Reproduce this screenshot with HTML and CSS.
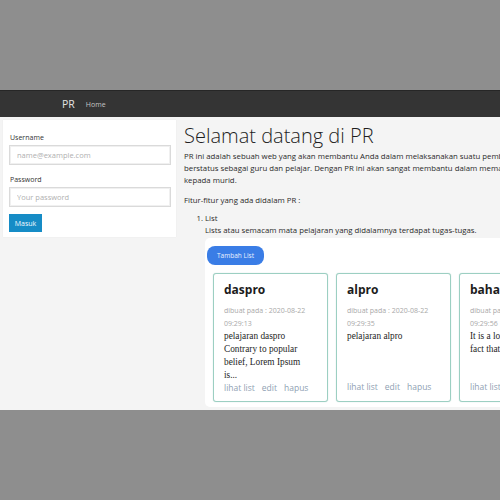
FILE: index.html
```html
<!DOCTYPE html>
<html>
<head>
<meta charset="utf-8">
<link rel="stylesheet" href="styles.css">
</head>
<body>
<div class="top-gap"></div>
<nav class="navbar">
  <span class="brand">PR</span>
  <a class="nav-link">Home</a>
</nav>
<div class="page">
  <aside class="sidebar">
    <form class="login">
      <label class="lbl">Username</label>
      <input class="inp" type="text" placeholder="name@example.com">
      <label class="lbl lbl-2">Password</label>
      <input class="inp" type="password" placeholder="Your password">
      <button class="btn-masuk" type="button">Masuk</button>
    </form>
  </aside>
  <main class="main">
    <h1 class="title">Selamat datang di PR</h1>
    <p class="lead">PR ini adalah sebuah web yang akan membantu Anda dalam melaksanakan suatu pemberian tugas bagi yang berstatus sebagai guru dan pelajar. Dengan PR ini akan sangat membantu dalam memantau pemberian tugas kepada murid.</p>
    <p class="fitur">Fitur-fitur yang ada didalam PR :</p>
    <ol class="features">
      <li>List<div class="desc">Lists atau semacam mata pelajaran yang didalamnya terdapat tugas-tugas.</div></li>
    </ol>
    <section class="list-box">
      <button class="btn-tambah" type="button">Tambah List</button>
      <div class="cards">
        <div class="card">
          <div class="card-title">daspro</div>
          <div class="card-date">dibuat pada : 2020-08-22 09:29:13</div>
          <div class="card-text">pelajaran daspro Contrary to popular belief, Lorem Ipsum is...</div>
          <div class="card-links"><a>lihat list</a><a>edit</a><a>hapus</a></div>
        </div>
        <div class="card">
          <div class="card-title">alpro</div>
          <div class="card-date">dibuat pada : 2020-08-22 09:29:35</div>
          <div class="card-text">pelajaran alpro</div>
          <div class="card-links"><a>lihat list</a><a>edit</a><a>hapus</a></div>
        </div>
        <div class="card">
          <div class="card-title">bahasa</div>
          <div class="card-date">dibuat pada : 2020-08-22 09:29:56</div>
          <div class="card-text">It is a long established fact that...</div>
          <div class="card-links"><a>lihat list</a><a>edit</a><a>hapus</a></div>
        </div>
      </div>
    </section>
  </main>
</div>
</body>
</html>
```
FILE: styles.css
```css
html, body {
  margin: 0;
  padding: 0;
}
body {
  background: #8e8e8e;
  overflow: hidden;
  width: 500px;
  height: 500px;
  font-family: "Open Sans", "DejaVu Sans", sans-serif;
  color: #222;
}
.top-gap {
  height: 90px;
}
.navbar {
  height: 26px;
  background: #343434;
  border-top: 1px solid #262626;
  display: flex;
  align-items: center;
  padding-left: 62px;
  gap: 11px;
}
.brand {
  color: #e2e2e2;
  font-size: 10.5px;
}
.nav-link {
  color: #c4c4c4;
  font-size: 7px;
}
.page {
  background: #f4f4f4;
  height: 293px;
  width: 640px;
  display: flex;
  align-items: flex-start;
}
.sidebar {
  width: 173px;
  margin: 3px 0 0 3px;
  flex: none;
}
.login {
  background: #fff;
  padding: 12px 5px 5px 6px;
  display: flex;
  flex-direction: column;
  align-items: flex-start;
  box-shadow: 0 0 1px rgba(0,0,0,0.08);
}
.lbl {
  font-size: 7px;
  line-height: 11px;
  color: #333;
  padding-left: 1px;
}
.lbl-2 {
  margin-top: 9px;
}
.inp {
  box-sizing: border-box;
  width: 162px;
  height: 20px;
  margin: 2px 0 0 0;
  border: 1px solid #dadada;
  box-shadow: inset 0 0 0 1px #f0f0f0;
  padding: 0 0 0 7px;
  font-family: "Open Sans", sans-serif;
  font-size: 7.5px;
  color: #555;
  outline: none;
}
.inp::placeholder {
  color: #b0b0b0;
}
.btn-masuk {
  margin-top: 7px;
  width: 33px;
  height: 18px;
  border: none;
  padding: 0;
  background: #168cc6;
  color: #f4faff;
  font-family: "Open Sans", sans-serif;
  font-size: 7px;
}
.main {
  margin-left: 8px;
  padding-top: 7px;
  width: 420px;
  flex: none;
}
.title {
  margin: 0;
  font-size: 20px;
  line-height: 24px;
  font-weight: 300;
  color: #1e1e1e;
}
.lead {
  margin: 2px 0 0 0;
  font-size: 7.8px;
  line-height: 12px;
  color: #2a2a2a;
  width: 412px;
}
.fitur {
  margin: 8px 0 0 0;
  font-size: 7.8px;
  line-height: 12px;
  color: #2a2a2a;
}
.features {
  margin: 6px 0 0 0;
  padding-left: 21px;
  font-size: 7.8px;
  line-height: 12px;
  color: #2a2a2a;
}
.desc {
  line-height: 13px;
}
.list-box {
  margin-top: 1px;
  margin-left: 21px;
  background: #fff;
  border-radius: 5px 0 0 5px;
  padding: 8px 0 4px 2px;
  height: 169px;
  box-sizing: border-box;
  width: 400px;
}
.btn-tambah {
  display: block;
  width: 57px;
  height: 19px;
  border: none;
  border-radius: 8px;
  background: #3a7de6;
  color: #eaf2ff;
  font-family: "Open Sans", sans-serif;
  font-size: 6.5px;
  padding: 0;
}
.cards {
  display: flex;
  gap: 8px;
  margin-top: 8px;
  padding-left: 6px;
}
.card {
  width: 115px;
  height: 129px;
  box-sizing: border-box;
  border: 1px solid #9ccfc2;
  border-radius: 3px;
  box-shadow: 0 0 1px rgba(120,180,165,0.6);
  padding: 8px 8px 8px 10px;
  display: flex;
  flex-direction: column;
  flex: none;
  overflow: hidden;
  background: #fff;
}
.card-title {
  font-size: 12px;
  line-height: 16px;
  font-weight: 700;
  color: #1c1c1c;
}
.card-date {
  margin-top: 6px;
  font-size: 7px;
  line-height: 13px;
  color: #a8a8a8;
  width: 90px;
}
.card-text {
  font-family: "Liberation Serif", "DejaVu Serif", serif;
  font-size: 9.3px;
  line-height: 13px;
  color: #1e1e1e;
  width: 88px;
}
.card-links {
  margin-top: auto;
  font-size: 8.5px;
  line-height: 12px;
  color: #8f9fb3;
  display: flex;
  gap: 7px;
  white-space: nowrap;
}
```
